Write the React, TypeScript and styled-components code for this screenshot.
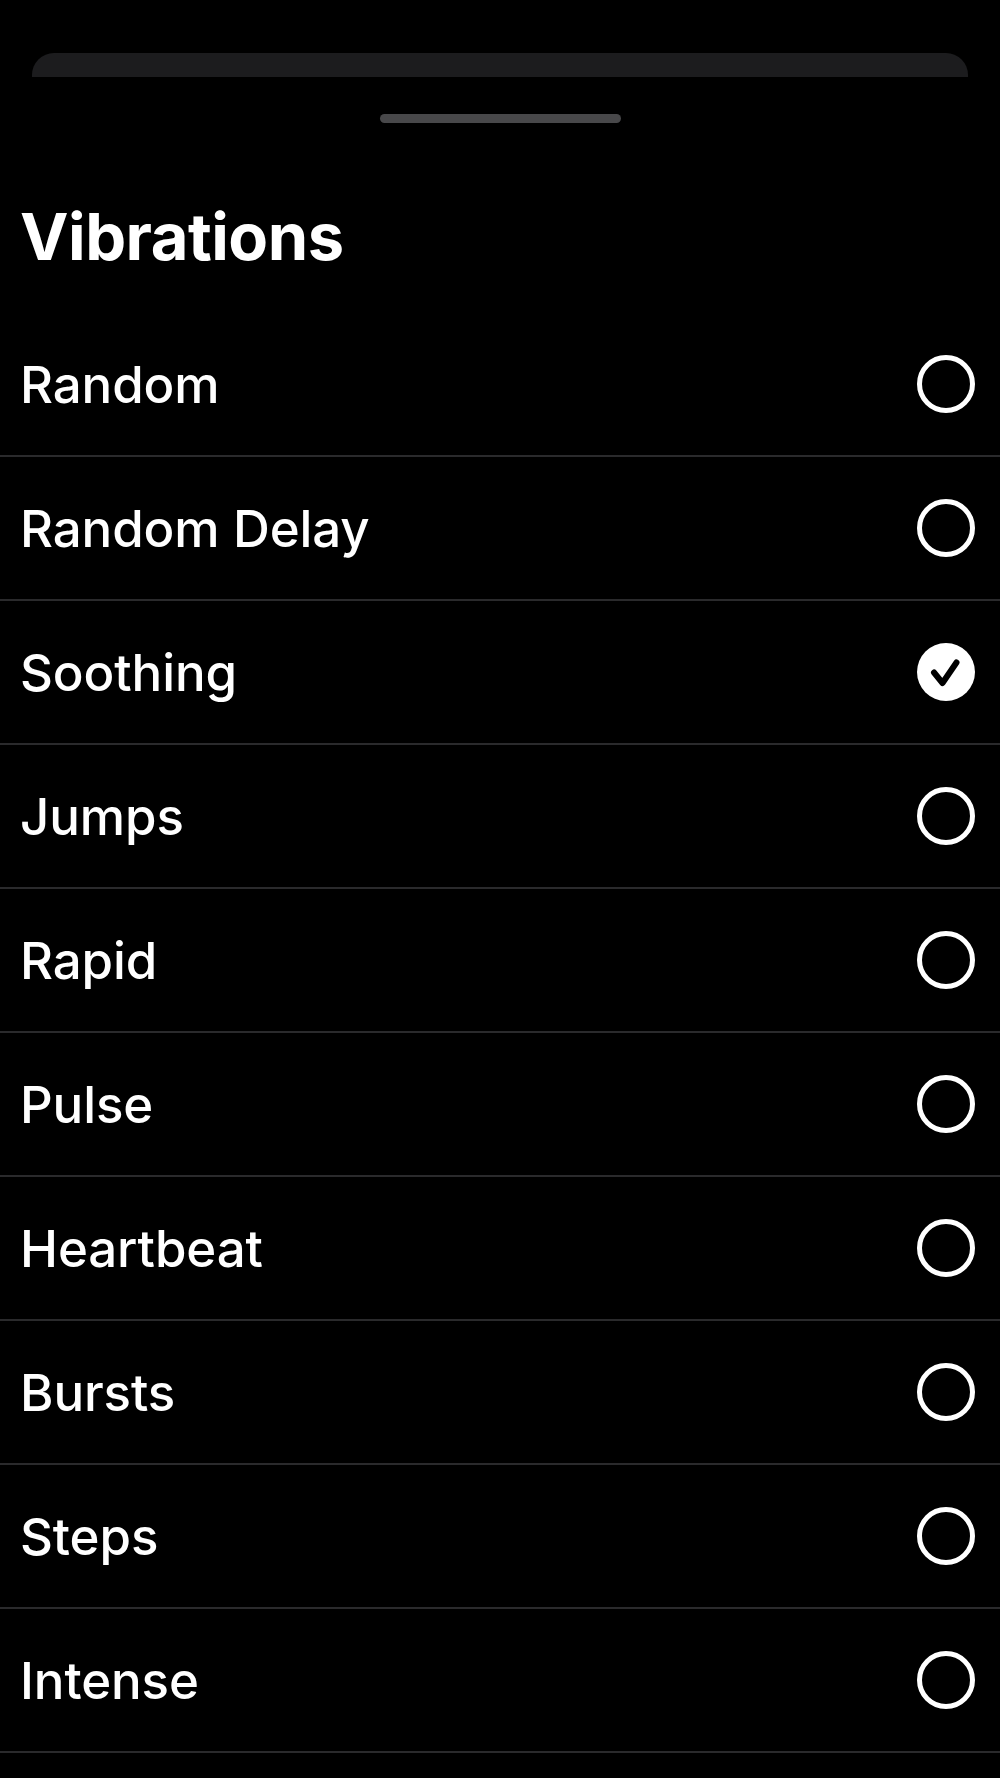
import styled, { createGlobalStyle } from "styled-components";

const options = [
  "Random",
  "Random Delay",
  "Soothing",
  "Jumps",
  "Rapid",
  "Pulse",
  "Heartbeat",
  "Bursts",
  "Steps",
  "Intense",
];

const selected = "Soothing";

const GlobalStyle = createGlobalStyle`
  html, body {
    margin: 0;
    padding: 0;
    background: #000;
  }
  body {
    font-family: Inter, "Noto Sans", "Liberation Sans", sans-serif;
    color: #fff;
  }
`;

const RadioMark = ({ checked }: { checked: boolean }) =>
  checked ? (
    <svg width="58" height="58" viewBox="0 0 58 58">
      <circle cx="29" cy="29" r="29" fill="#fff" />
      <path
        d="M17 29.5 L25.5 40 L39.5 19.5"
        fill="none"
        stroke="#000"
        strokeWidth="6"
        strokeLinecap="round"
        strokeLinejoin="round"
      />
    </svg>
  ) : (
    <svg width="58" height="58" viewBox="0 0 58 58">
      <circle cx="29" cy="29" r="26.5" fill="none" stroke="#fff" strokeWidth="5" />
    </svg>
  );

const App = () => {
  return (
    <>
      <GlobalStyle />
      <Screen>
        <BehindCard />
        <Sheet>
          <Grabber />
          <Title>Vibrations</Title>
          <List>
            {options.map((name) => (
              <Row key={name}>
                <Label>{name}</Label>
                <RadioMark checked={name === selected} />
              </Row>
            ))}
          </List>
        </Sheet>
      </Screen>
    </>
  );
};

export default App;

// styles
const Screen = styled.div`
  width: 1000px;
  min-height: 1778px;
  background: #000;
  padding-top: 53px;
  box-sizing: border-box;
  overflow: hidden;
`;

const BehindCard = styled.div`
  height: 24px;
  margin: 0 32px;
  background: #1c1c1e;
  border-radius: 22px 22px 0 0;
`;

const Sheet = styled.div`
  display: flex;
  flex-direction: column;
`;

const Grabber = styled.div`
  align-self: center;
  width: 241px;
  height: 9px;
  margin-top: 37px;
  border-radius: 5px;
  background: #48484a;
`;

const Title = styled.h1`
  margin: 81px 0 0 20px;
  font-size: 65px;
  line-height: 1;
  font-weight: 700;
  letter-spacing: -0.5px;
  color: #fff;
`;

const List = styled.div`
  margin-top: 44px;
  display: flex;
  flex-direction: column;
`;

const Row = styled.div`
  height: 142px;
  display: flex;
  align-items: center;
  justify-content: space-between;
  padding: 0 25px 0 20px;
  border-bottom: 2px solid #2a2a2c;
`;

const Label = styled.span`
  font-size: 51px;
  font-weight: 550;
  letter-spacing: -0.1px;
  color: #fff;
`;
